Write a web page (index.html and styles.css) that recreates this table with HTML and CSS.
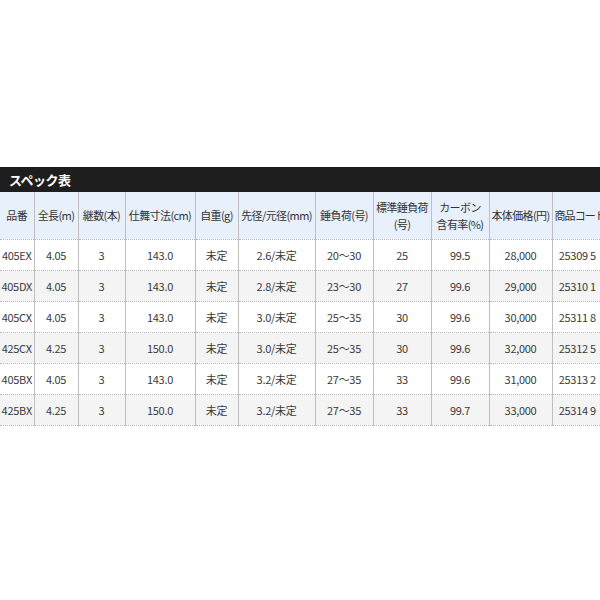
FILE: index.html
```html
<!DOCTYPE html>
<html lang="ja">
<head>
<meta charset="utf-8">
<title>スペック表</title>
<link rel="stylesheet" href="styles.css">
</head>
<body>
<div class="page">
  <div class="spec">
    <div class="spec-title">スペック表</div>
    <table class="spec-table">
      <colgroup>
        <col class="c1"><col class="c2"><col class="c3"><col class="c4"><col class="c5"><col class="c6"><col class="c7"><col class="c8"><col class="c9"><col class="c10"><col class="c11">
      </colgroup>
      <thead>
        <tr>
          <th>品番</th><th>全長(m)</th><th>継数(本)</th><th>仕舞寸法(cm)</th><th>自重(g)</th><th>先径/元径(mm)</th><th>錘負荷(号)</th><th>標準錘負荷<br>(号)</th><th>カーボン<br>含有率(%)</th><th>本体価格(円)</th><th>商品コード</th>
        </tr>
      </thead>
      <tbody>
        <tr><td>405EX</td><td>4.05</td><td>3</td><td>143.0</td><td>未定</td><td>2.6/未定</td><td>20～30</td><td>25</td><td>99.5</td><td>28,000</td><td>25309 5</td></tr>
        <tr><td>405DX</td><td>4.05</td><td>3</td><td>143.0</td><td>未定</td><td>2.8/未定</td><td>23～30</td><td>27</td><td>99.6</td><td>29,000</td><td>25310 1</td></tr>
        <tr><td>405CX</td><td>4.05</td><td>3</td><td>143.0</td><td>未定</td><td>3.0/未定</td><td>25～35</td><td>30</td><td>99.6</td><td>30,000</td><td>25311 8</td></tr>
        <tr><td>425CX</td><td>4.25</td><td>3</td><td>150.0</td><td>未定</td><td>3.0/未定</td><td>25～35</td><td>30</td><td>99.6</td><td>32,000</td><td>25312 5</td></tr>
        <tr><td>405BX</td><td>4.05</td><td>3</td><td>143.0</td><td>未定</td><td>3.2/未定</td><td>27～35</td><td>33</td><td>99.6</td><td>31,000</td><td>25313 2</td></tr>
        <tr><td>425BX</td><td>4.25</td><td>3</td><td>150.0</td><td>未定</td><td>3.2/未定</td><td>27～35</td><td>33</td><td>99.7</td><td>33,000</td><td>25314 9</td></tr>
      </tbody>
    </table>
  </div>
</div>
</body>
</html>
```
FILE: styles.css
```css
html, body {
  margin: 0;
  padding: 0;
  background: #ffffff;
}
.page {
  width: 600px;
  height: 600px;
  overflow: hidden;
  padding-top: 167px;
  box-sizing: border-box;
  font-family: "Noto Sans CJK JP", "Liberation Sans", sans-serif;
  color: #333333;
}
.spec {
  width: 602px;
}
.spec-title {
  height: 25px;
  line-height: 25px;
  background: #1e1e1e;
  color: #ffffff;
  font-weight: bold;
  font-size: 13px;
  padding-left: 9px;
  letter-spacing: -0.5px;
}
.spec-table {
  width: 602px;
  table-layout: fixed;
  border-collapse: collapse;
  font-size: 11px;
}
.c1 { width: 34px; }
.c2 { width: 44px; }
.c3 { width: 47px; }
.c4 { width: 70px; }
.c5 { width: 43px; }
.c6 { width: 77px; }
.c7 { width: 58px; }
.c8 { width: 58px; }
.c9 { width: 58px; }
.c10 { width: 63px; }
.c11 { width: 50px; }
.spec-table th,
.spec-table td {
  padding: 0;
  text-align: center;
  white-space: nowrap;
  overflow: hidden;
  border-left: 1px solid #bfbfbf;
  border-bottom: 1px dotted #b5b5b5;
}
.spec-table th:first-child,
.spec-table td:first-child {
  border-left: none;
}
.spec-table th {
  height: 47px;
  background: #e8f0fb;
  font-weight: normal;
  font-size: 11px;
  line-height: 17px;
  letter-spacing: -0.6px;
}
.spec-table th:last-child {
  text-align: left;
  padding-left: 2px;
  letter-spacing: -0.9px;
}
.spec-table td {
  height: 30px;
  letter-spacing: -0.3px;
  color: #3a3a3a;
}
.spec-table tbody tr:nth-child(even) td {
  background: #f4f4f4;
}
```
